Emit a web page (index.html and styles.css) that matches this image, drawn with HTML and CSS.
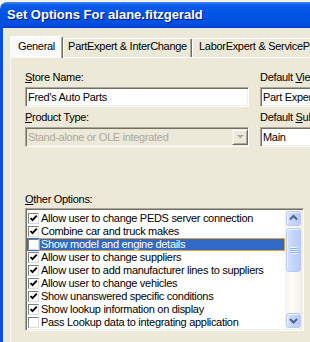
FILE: index.html
```html
<!DOCTYPE html>
<html lang="en">
<head>
    <meta charset="UTF-8">
    <title>Set Options</title>
    <link rel="stylesheet" href="styles.css">
</head>
<body>
    <div class="window">
        <div class="titlebar">Set Options For alane.fitzgerald</div>
        <div class="frame">
            <div class="tabs">
                <div class="tab active">General</div>
                <div class="tab tab-part">PartExpert &amp; InterChange</div>
                <div class="tab tab-labor">LaborExpert &amp; ServicePro</div>
            </div>
            <div class="page">
                <div class="fields">
                    <div class="col col-left">
                        <div class="lbl"><u>S</u>tore Name:</div>
                        <div class="input">Fred's Auto Parts</div>
                        <div class="lbl lbl-next"><u>P</u>roduct Type:</div>
                        <div class="input combo">
                            <span class="combo-text">Stand-alone or OLE integrated</span>
                            <span class="dropbtn">
                                <svg width="7" height="5" viewBox="0 0 7 5"><path d="M1 1h6L4 4z" fill="#fff"/><path d="M0 0h7L3.5 3.5z" fill="#aca899"/></svg>
                            </span>
                        </div>
                    </div>
                    <div class="col col-right">
                        <div class="lbl">Default <u>V</u>iew:</div>
                        <div class="input">Part Expert</div>
                        <div class="lbl lbl-next">Default <u>S</u>ubpage:</div>
                        <div class="input">Main</div>
                    </div>
                </div>
                <div class="lbl lbl-other"><u>O</u>ther Options:</div>
                <div class="listbox">
                    <ul class="items">
                        <li class="item"><span class="check on"></span><span class="txt">Allow user to change PEDS server connection</span></li>
                        <li class="item"><span class="check on"></span><span class="txt">Combine car and truck makes</span></li>
                        <li class="item selected"><span class="check"></span><span class="txt">Show model and engine details</span></li>
                        <li class="item"><span class="check on"></span><span class="txt">Allow user to change suppliers</span></li>
                        <li class="item"><span class="check on"></span><span class="txt">Allow user to add manufacturer lines to suppliers</span></li>
                        <li class="item"><span class="check on"></span><span class="txt">Allow user to change vehicles</span></li>
                        <li class="item"><span class="check on"></span><span class="txt">Show unanswered specific conditions</span></li>
                        <li class="item"><span class="check on"></span><span class="txt">Show lookup information on display</span></li>
                        <li class="item"><span class="check"></span><span class="txt">Pass Lookup data to integrating application</span></li>
                    </ul>
                    <div class="scrollbar">
                        <div class="sbtn">
                            <svg width="15" height="15" viewBox="0 0 15 15"><path d="M4 8.5l3.5-3.5 3.5 3.5" fill="none" stroke="#4d6185" stroke-width="2"/></svg>
                        </div>
                        <div class="thumb"><span class="grip"></span></div>
                        <div class="track"></div>
                        <div class="sbtn">
                            <svg width="15" height="15" viewBox="0 0 15 15"><path d="M4 6l3.5 3.5 3.5-3.5" fill="none" stroke="#4d6185" stroke-width="2"/></svg>
                        </div>
                    </div>
                </div>
            </div>
        </div>
    </div>
</body>
</html>
```

FILE: styles.css
```css
* {
    margin: 0;
    padding: 0;
    box-sizing: border-box;
}
body {
    width: 310px;
    height: 342px;
    overflow: hidden;
    background: #f4f3ee;
    font-family: 'Liberation Sans', Arial, sans-serif;
    font-size: 11px;
    color: #000;
}
.window {
    width: 380px;
    margin-top: 2px;
}
.titlebar {
    height: 26px;
    padding-left: 7px;
    border-radius: 7px 0 0 0;
    background: linear-gradient(#3d8af7 0, #0a5ce9 3px, #0054e3 45%, #0050e0 85%, #003cd2 100%);
    color: #fff;
    font-size: 13px;
    font-weight: 700;
    line-height: 26px;
    text-shadow: 1px 1px #0a1883;
}
.frame {
    height: 320px;
    background: #ece9d8;
    border-left: 3px solid #0b4ee3;
    padding: 8px 0 0 7px;
}
/* tab strip */
.tabs {
    display: flex;
    align-items: flex-end;
    height: 21px;
}
.tab {
    flex: none;
    height: 19px;
    padding-top: 1px;
    background: #ece9d8;
    border-top: 1px solid #fff;
    border-left: 1px solid #fff;
    border-right: 1px solid #716f64;
    border-radius: 2px 2px 0 0;
    box-shadow: inset -1px 0 #aca899;
    text-align: center;
    line-height: 13px;
    white-space: nowrap;
    letter-spacing: -0.3px;
}
.tab.active {
    position: relative;
    z-index: 1;
    width: 53px;
    height: 22px;
    margin-bottom: -1px;
    padding-top: 3px;
    background: #fbfbf9;
}
.tab-part {
    width: 129px;
}
.tab-labor {
    width: 140px;
    padding-left: 6px;
    text-align: left;
}
/* page */
.page {
    height: 290px;
    background: #ece9d8;
    border-top: 1px solid #fff;
    border-left: 1px solid #fff;
    padding: 13px 0 0 14px;
}
.fields {
    display: flex;
    gap: 11px;
}
.col {
    flex: none;
}
.col-left {
    width: 224px;
}
.col-right {
    width: 120px;
}
.lbl {
    line-height: 13px;
    letter-spacing: -0.3px;
    white-space: nowrap;
}
.lbl-next {
    margin-top: 4px;
}
.input {
    height: 20px;
    margin-top: 3px;
    padding: 1px 2px;
    background: #fff;
    border: 1px solid;
    border-color: #aca899 #fff #fff #aca899;
    box-shadow: inset 1px 1px #716f64, inset -1px -1px #f1efe2;
    line-height: 16px;
    letter-spacing: -0.3px;
    white-space: nowrap;
    overflow: hidden;
}
.combo {
    display: flex;
    padding-right: 0;
    background: #ece9d8;
    color: #aca899;
}
.combo-text {
    flex: 1;
}
.dropbtn {
    width: 16px;
    height: 16px;
    display: flex;
    align-items: center;
    justify-content: center;
    background: #ece9d8;
    border: 1px solid;
    border-color: #f1efe2 #716f64 #716f64 #f1efe2;
    box-shadow: inset 1px 1px #fff, inset -1px -1px #aca899;
}
.lbl-other {
    margin-top: 46px;
}
/* list with checkboxes */
.listbox {
    width: 279px;
    height: 123px;
    margin-top: 2px;
    display: flex;
    padding: 1px;
    background: #fff;
    border: 1px solid;
    border-color: #aca899 #fff #fff #aca899;
    box-shadow: inset 1px 1px #716f64, inset -1px -1px #f1efe2;
}
.items {
    flex: 1;
    list-style: none;
    padding-top: 2px;
}
.item {
    display: flex;
    align-items: center;
    height: 13px;
    padding-left: 1px;
    white-space: nowrap;
    letter-spacing: -0.3px;
}
.check {
    width: 11px;
    height: 11px;
    flex: none;
    background: #fff;
    border: 1px solid;
    border-color: #808080 #dcdcdc #dcdcdc #808080;
}
.check.on {
    background: #fff url("data:image/svg+xml,%3Csvg xmlns='http://www.w3.org/2000/svg' width='9' height='9'%3E%3Cpath d='M1.5 4l2 2.2L7.8 1.6' fill='none' stroke='%23000' stroke-width='1.8'/%3E%3C/svg%3E") no-repeat center;
}
.txt {
    flex: 1;
    height: 13px;
    padding-left: 1px;
    border: 1px solid transparent;
    line-height: 11px;
}
.item.selected {
    background: #316ac5;
}
.item.selected .txt {
    color: #fff;
    border-color: #e5a03a;
}
/* xp scrollbar */
.scrollbar {
    width: 17px;
    display: flex;
    flex-direction: column;
    background: linear-gradient(90deg, #f3f1ec, #fefefb 40%, #eeede5);
}
.sbtn,
.thumb {
    width: 15px;
    margin: 1px;
    border: 1px solid #b7cbf6;
    border-radius: 3px;
    background: linear-gradient(90deg, #d4e0fd, #c3d4fc 50%, #b8cbf9);
    box-shadow: inset 1px 1px #eef3fe;
}
.sbtn {
    height: 15px;
}
.sbtn svg {
    display: block;
    margin: -1px;
}
.thumb {
    height: 44px;
    display: flex;
    align-items: center;
    justify-content: center;
}
.grip {
    width: 7px;
    height: 7px;
    background: repeating-linear-gradient(#eef4fe 0 1px, #8cb0f8 1px 2px);
}
.track {
    flex: 1;
}
```
